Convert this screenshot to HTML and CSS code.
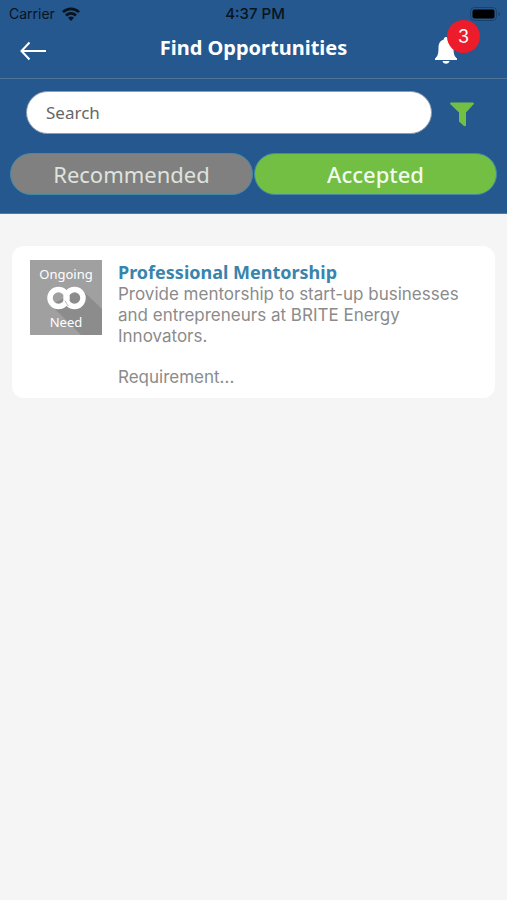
FILE: index.html
```html
<!DOCTYPE html>
<html lang="en">
<head>
<meta charset="utf-8">
<meta name="viewport" content="width=device-width, initial-scale=1">
<title>Find Opportunities</title>
<link rel="stylesheet" href="styles.css">
</head>
<body>
<header class="top">
  <div class="status">
    <span class="carrier">Carrier
      <svg width="18" height="14" viewBox="0 0 18 14" aria-hidden="true"><g fill="none" stroke="#081420" stroke-width="2.6"><path d="M1 5.2C5.4.8 12.6.8 17 5.2"/><path d="M4 8.5c2.8-2.8 7.2-2.8 10 0"/></g><path d="M6 10.8c1.7-1.6 4.3-1.6 6 0L9 14z" fill="#081420"/></svg>
    </span>
    <time class="time">4:37 PM</time>
    <span class="battery"><svg width="31" height="14" viewBox="0 0 31 14" aria-hidden="true"><rect x=".5" y=".5" width="26" height="13" rx="4" fill="none" stroke="#1b426c"/><rect x="2.500" y="2.500" width="22" height="9" rx="2" fill="#000"/><path d="M28.500 5v4c2-.6 2-3.400 0-4z" fill="#1b426c"/></svg></span>
  </div>
  <nav class="nav">
    <button class="icon-button back" aria-label="Back"><svg width="27" height="20" viewBox="0 0 27 20"><path d="M9.500 1.500 1.500 10l8 8.500M2 10h24" fill="none" stroke="#fff" stroke-width="2"/></svg></button>
    <h1 class="heading">Find Opportunities</h1>
    <button class="icon-button bell" aria-label="Notifications, 3 unread"><svg width="22" height="27" viewBox="0 0 22 27"><path d="M11 0c1.400 0 2.200 1 2.200 2.600C17 3.600 18.500 7 18.500 11c0 6 1 8.500 3.500 10.500V23H0v-1.500C2.500 19.500 3.500 17 3.500 11c0-4 1.500-7.400 5.300-8.400C8.800 1 9.600 0 11 0zM7.500 24h7c-.5 3.500-6.500 3.500-7 0z" fill="#fff"/></svg><span class="badge">3</span></button>
  </nav>
  <div class="tools">
    <div class="search-row">
      <input class="search" type="search" placeholder="Search" aria-label="Search">
      <button class="icon-button filter" aria-label="Filter"><svg width="24" height="25" viewBox="0 0 24 25"><path d="M1 .5h22q1.500.5.6 1.700L16 10.500V23q-.3 2-2 1L9 19.500v-9L.4 2.200Q-.5 1 1 .5z" fill="#72bf44"/></svg></button>
    </div>
    <div class="tabs">
      <button class="tab">Recommended</button>
      <button class="tab tab-active" aria-pressed="true">Accepted</button>
    </div>
  </div>
</header>
<main class="list">
  <article class="card">
    <div class="thumb">
      <svg class="shade" viewBox="0 0 72 75" preserveAspectRatio="none" aria-hidden="true"><path d="M51 29 72 49v26H51L21 45z" fill="#8c8c8c"/></svg>
      <span>Ongoing</span>
      <svg width="39" height="24" viewBox="0 0 39 24" aria-hidden="true"><g fill="none" stroke="#fff" stroke-width="5.500"><circle cx="11.500" cy="12" r="8.500"/><circle cx="27.500" cy="12" r="8.500"/></g><path d="M18 14.500q1.500 3.500 3.500 5.500" fill="none" stroke="#bbb" stroke-width="1"/></svg>
      <span>Need</span>
    </div>
    <div class="info">
      <h2 class="title">Professional Mentorship</h2>
      <p class="text">Provide mentorship to start-up businesses and entrepreneurs at BRITE Energy Innovators.</p>
      <p class="text">Requirement...</p>
    </div>
  </article>
</main>
</body>
</html>
```
FILE: styles.css
```css
* { box-sizing: border-box; }
body {
  margin: 0;
  min-height: 100vh;
  background: #f5f5f5;
  font-family: "Noto Sans", sans-serif;
}
h1, h2, p { margin: 0; }
button { font: inherit; cursor: pointer; }
svg { display: block; }

.top {
  background: #24588f;
  border-bottom: 1px solid #4d7aa9;
}
.status {
  display: grid;
  grid-template-columns: 1fr auto 1fr;
  align-items: center;
  height: 28px;
  padding: 0 6px 0 9px;
  color: #081420;
  font: 14px/28px Inter, sans-serif;
}
.carrier { display: flex; align-items: center; gap: 7px; }
.time { font-weight: 500; font-size: 15px; }
.battery { justify-self: end; }

.nav {
  display: grid;
  grid-template-columns: 1fr auto 1fr;
  align-items: center;
  height: 51px;
  padding: 0 50px 10px 20px;
  border-bottom: 1px solid #4d7398;
}
.icon-button {
  display: block;
  padding: 0;
  border: 0;
  background: none;
}
.back { justify-self: start; padding-top: 6px; }
.heading {
  padding-left: 30px;
  color: #fff;
  font-size: 20px;
  line-height: 28px;
}
.bell { position: relative; justify-self: end; padding-top: 4px; }
.badge {
  position: absolute;
  top: -13px;
  left: 12px;
  width: 33px;
  height: 33px;
  border-radius: 50%;
  background: #ed1c2b;
  color: #fff;
  font: 18px/33px Inter, sans-serif;
}

.tools { padding: 12px 10px 18px; }
.search-row {
  display: flex;
  align-items: center;
  gap: 18px;
  padding: 0 23px 0 16px;
}
.filter { padding-top: 4px; }
.search {
  flex: 1;
  min-width: 0;
  height: 43px;
  padding: 0 19px;
  border: 1px solid #8b9cae;
  border-radius: 22px;
  background: #fff;
  color: #555;
  font: 17px "Noto Sans", sans-serif;
  appearance: none;
}
.search::placeholder { color: #666; opacity: 1; }
.tabs {
  display: grid;
  grid-template-columns: 1fr 1fr;
  gap: 1px;
  margin-top: 19px;
}
.tab {
  height: 42px;
  padding: 0;
  border: 1px solid #438aa5;
  border-radius: 21px;
  background: #808080;
  color: #dfe3dc;
  font-size: 22px;
}
.tab-active {
  background: #72bf44;
  color: #f1faed;
  font-weight: 500;
}

.list { padding: 32px 12px; }
.card {
  display: flex;
  align-items: flex-start;
  gap: 16px;
  padding: 14px 18px 10px;
  border-radius: 12px;
  background: #fff;
}
.thumb {
  position: relative;
  display: flex;
  flex: none;
  flex-direction: column;
  align-items: center;
  justify-content: center;
  width: 72px;
  height: 75px;
  background: #a0a0a0;
  color: #fff;
  font-size: 13px;
  line-height: 24px;
}
.thumb > * { position: relative; }
.thumb .shade { position: absolute; inset: 0; width: 100%; height: 100%; }
.info { flex: 1; min-width: 0; }
.title {
  color: #3984ac;
  font-size: 18px;
  line-height: 24px;
}
.text {
  color: #8b8b8b;
  font: 17px/21px Inter, sans-serif;
}
.text + .text { margin-top: 20px; }
```
